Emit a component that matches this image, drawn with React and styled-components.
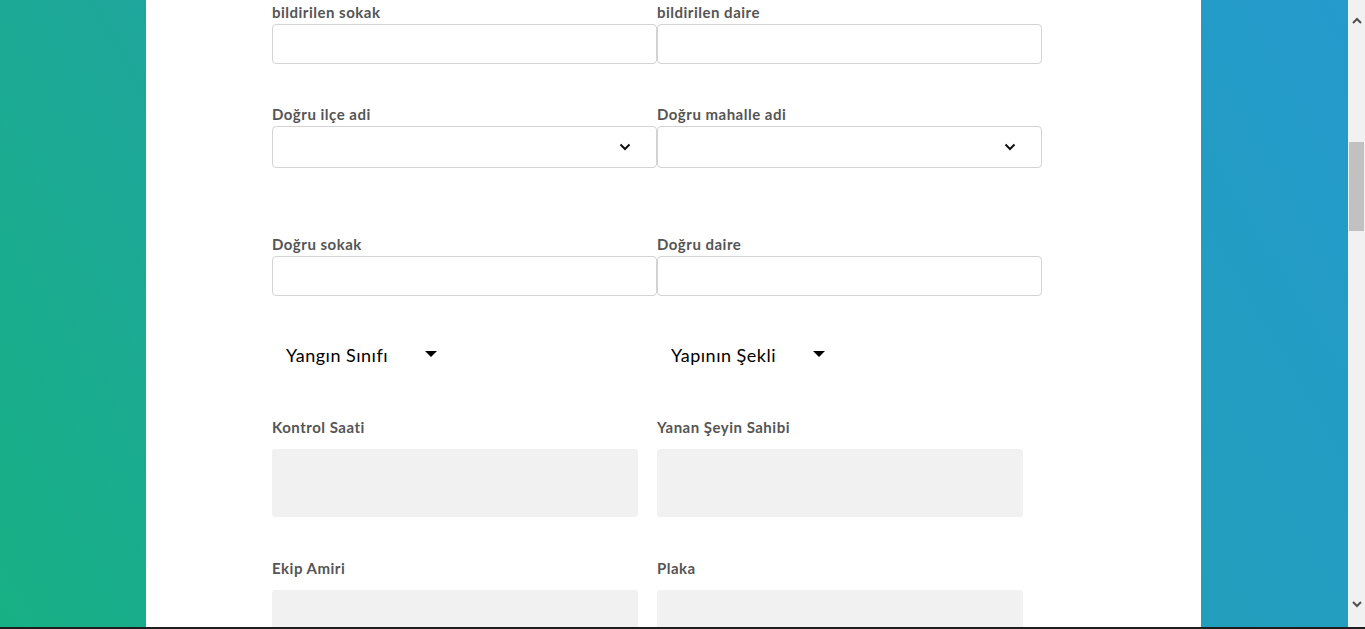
import React from 'react'
import styled, { createGlobalStyle } from 'styled-components'

const GlobalStyle = createGlobalStyle`
  html, body {
    margin: 0;
    padding: 0;
    overflow: hidden;
  }
  body {
    font-family: Lato, "Open Sans", "Liberation Sans", sans-serif;
  }
`;

const Screen = styled.div`
  width: 1365px;
  height: 629px;
  display: flex;
  flex-direction: column;
  overflow: hidden;
`;

const Main = styled.div`
  flex: 1;
  display: flex;
  min-height: 0;
`;

const Backdrop = styled.div`
  flex: 1;
  display: flex;
  background: linear-gradient(60deg, #17b084 0%, #1ea69c 30%, #229fb8 65%, #249acd 100%);
  overflow: hidden;
`;

const Side = styled.div`
  width: ${p => p.w}px;
  flex-shrink: 0;
`;

const Panel = styled.div`
  width: 1055px;
  flex-shrink: 0;
  background: #fff;
  padding: 3px 0 0 126px;
  box-sizing: border-box;
`;

const Row = styled.div`
  display: grid;
  grid-template-columns: 385px 385px;
  margin-top: ${p => p.mt || 0}px;
`;

const Label = styled.div`
  font-size: 15px;
  font-weight: 700;
  letter-spacing: 0.5px;
  line-height: 18px;
  color: #555;
  margin-bottom: ${p => p.mb || 3}px;
`;

const TextInput = styled.div`
  height: ${p => p.h || 40}px;
  border: 1px solid #d3d3d3;
  border-radius: 4px;
  box-sizing: border-box;
  background: #fff;
`;

const SelectBox = styled(TextInput)`
  display: flex;
  align-items: center;
  justify-content: flex-end;
  padding-right: 25px;
`;

const GrayBox = styled.div`
  width: 366px;
  height: 68px;
  background: #f1f1f1;
  border-radius: 3px;
`;

const Toggle = styled.div`
  height: 40px;
  display: flex;
  align-items: center;
  padding-left: 14px;
  font-size: 18px;
  letter-spacing: 0.5px;
  color: #000;
`;

const Caret = styled.span`
  margin-left: 37px;
  width: 0;
  height: 0;
  border-left: 6px solid transparent;
  border-right: 6px solid transparent;
  border-top: 6px solid #000;
  margin-top: -2px;
`;

const Scrollbar = styled.div`
  width: 17px;
  flex-shrink: 0;
  background: #f1f1f1;
  display: flex;
  flex-direction: column;
  align-items: center;
`;

const Arrow = styled.div`
  height: 17px;
  width: 17px;
  display: flex;
  align-items: center;
  justify-content: center;
  margin-top: ${p => p.mt || 0}px;
`;

const Thumb = styled.div`
  width: 15px;
  height: 89px;
  background: #c1c1c1;
  margin-top: ${p => p.mt}px;
`;

const Taskbar = styled.div`
  height: 2px;
  background: #1e1e1e;
`;

const Chevron = () => (
  <svg width="12" height="8" viewBox="0 0 12 8">
    <path d="M1.5 1.5 L6 6 L10.5 1.5" fill="none" stroke="#111" strokeWidth="2" />
  </svg>
);

const ScrollArrow = ({ up }) => (
  <svg width="10" height="7" viewBox="0 0 10 7">
    <path d={up ? 'M1 6 L5 2 L9 6' : 'M1 1 L5 5 L9 1'} fill="none" stroke="#505050" strokeWidth="2" />
  </svg>
);

const Field = ({ label, children, mb }) => (
  <div>
    <Label mb={mb}>{label}</Label>
    {children}
  </div>
);

const App = () => {
  return (
    <Screen>
      <GlobalStyle />
      <Main>
        <Backdrop>
          <Side w={146} />
          <Panel>
            <Row>
              <Field label="bildirilen sokak"><TextInput /></Field>
              <Field label="bildirilen daire"><TextInput /></Field>
            </Row>
            <Row mt={41}>
              <Field label="Doğru ilçe adi"><SelectBox h={42}><Chevron /></SelectBox></Field>
              <Field label="Doğru mahalle adi"><SelectBox h={42}><Chevron /></SelectBox></Field>
            </Row>
            <Row mt={67}>
              <Field label="Doğru sokak"><TextInput /></Field>
              <Field label="Doğru daire"><TextInput /></Field>
            </Row>
            <Row mt={39}>
              <Toggle>Yangın Sınıfı<Caret /></Toggle>
              <Toggle>Yapının Şekli<Caret /></Toggle>
            </Row>
            <Row mt={43}>
              <Field label="Kontrol Saati" mb={13}><GrayBox /></Field>
              <Field label="Yanan Şeyin Sahibi" mb={13}><GrayBox /></Field>
            </Row>
            <Row mt={42}>
              <Field label="Ekip Amiri" mb={13}><GrayBox /></Field>
              <Field label="Plaka" mb={13}><GrayBox /></Field>
            </Row>
          </Panel>
          <Side w={147} />
        </Backdrop>
        <Scrollbar>
          <Arrow mt={12}><ScrollArrow up /></Arrow>
          <Thumb mt={113} />
          <Arrow mt={365}><ScrollArrow /></Arrow>
        </Scrollbar>
      </Main>
      <Taskbar />
    </Screen>
  )
}

export default App
